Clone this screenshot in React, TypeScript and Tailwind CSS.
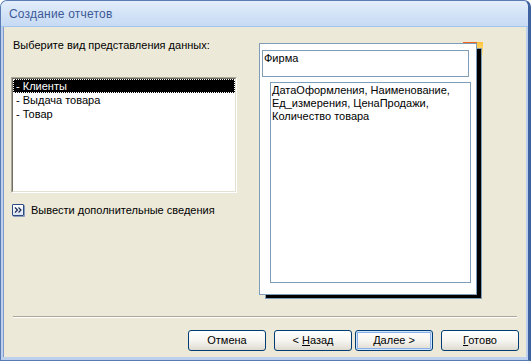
import React from "react";

const items = ["- Клиенты", "- Выдача товара", "- Товар"];

function XpButton({ children, primary }: { children: React.ReactNode; primary?: boolean }) {
  return (
    <button
      className={
        "w-[78px] h-[21px] rounded-[3px] border border-[#003c74] bg-gradient-to-b from-[#ffffff] via-[#f6f5f1] to-[#dedbd0] text-[11px] leading-[19px] text-black " +
        (primary ? "shadow-[inset_0_0_0_1px_#cee7ff,inset_0_0_0_2px_#8aaee6]" : "")
      }
    >
      {children}
    </button>
  );
}

export default function App() {
  return (
    <div className="w-[531px] h-[361px] flex flex-col rounded-t-[7px] border border-[#5a7cb4] border-r-[3px] border-r-[#3f62a0] bg-[#bcd0ee] overflow-hidden font-['Liberation_Sans',Arial,sans-serif]">
      {/* title bar */}
      <div className="h-[26px] shrink-0 flex items-center pl-[8px] bg-gradient-to-b from-[#e4eefa] via-[#d3e3f7] to-[#c7dbf4] border-b border-[#a2c4ee]">
        <span className="text-[12px] text-[#3d5a98] tracking-[0.2px]">Создание отчетов</span>
      </div>

      {/* body */}
      <div className="flex-1 mx-[2px] mb-[3px] flex flex-col bg-[#ece9d8] border-l border-[#7f9cc9]">
        <div className="h-[289px] shrink-0 flex">
          {/* left column */}
          <div className="ml-[7px] w-[226px] flex flex-col">
            <p className="mt-[11px] ml-[2px] h-[14px] text-[11px] leading-[14px] text-black">
              Выберите вид представления данных:
            </p>
            <div className="mt-[25px] h-[116px] border border-t-[#aca899] border-l-[#aca899] border-r-white border-b-white">
              <div className="h-full bg-white border border-t-[#716f64] border-l-[#716f64] border-r-[#e2dfd3] border-b-[#e2dfd3]">
                {items.map((it, i) => (
                  <div
                    key={it}
                    className={
                      "h-[14px] pl-[2px] text-[11px] leading-[12px] " +
                      (i === 0 ? "bg-black text-white border border-dotted border-white" : "text-black border border-transparent")
                    }
                  >
                    {it}
                  </div>
                ))}
              </div>
            </div>
            <div className="mt-[10px] flex items-center h-[14px]">
              <div className="ml-[1px] w-[12px] h-[12px] rounded-[1px] border border-[#2d4a85] bg-gradient-to-b from-white to-[#dbe4f4] flex items-center justify-center shadow-[1px_1px_0_#8a9bbd]">
                <svg width="8" height="6" viewBox="0 0 8 6">
                  <path d="M1 0.5 L3.5 3 L1 5.5 M4.5 0.5 L7 3 L4.5 5.5" stroke="#1b2a55" strokeWidth="1.2" fill="none" />
                </svg>
              </div>
              <span className="ml-[7px] text-[11px] text-black">Вывести дополнительные сведения</span>
            </div>
          </div>

          {/* preview */}
          <div className="relative ml-[22px] mt-[16px] w-[218px] h-[252px]">
            <div className="absolute left-[204px] top-[-1px] w-[15px] h-[2px] bg-[#f2641a]" />
            <div className="absolute left-[218px] top-[-1px] w-[6px] h-[13px] bg-gradient-to-b from-[#ffc23a] to-[#ffe98a]" />
            <div className="absolute left-[6px] top-[5px] w-[217px] h-[251px] bg-black border border-[#7f9db9]" />
            <div className="absolute inset-0 bg-white border border-[#7f9db9] pt-[6px] pl-[2px] flex flex-col">
              <div className="w-[207px] h-[27px] border border-[#7f9db9] px-[1px] text-[11px] leading-[14px] text-black">
                Фирма
              </div>
              <div className="ml-[8px] mt-[5px] w-[201px] h-[201px] border border-[#7f9db9] px-[1px] pt-[1px] text-[11px] leading-[13px] text-black">
                ДатаОформления, Наименование,
                <br />
                Ед_измерения, ЦенаПродажи,
                <br />
                Количество товара
              </div>
            </div>
          </div>
        </div>

        {/* separator */}
        <div className="mx-[9px] border-t border-[#aca899] border-b border-b-white" />

        {/* buttons */}
        <div className="mt-[12px] pr-[7px] flex justify-end">
          <XpButton>Отмена</XpButton>
          <div className="w-[8px]" />
          <XpButton>
            &lt; <span className="underline">Н</span>азад
          </XpButton>
          <div className="w-[3px]" />
          <XpButton primary>
            <span className="underline">Д</span>алее &gt;
          </XpButton>
          <div className="w-[8px]" />
          <XpButton>
            <span className="underline">Г</span>отово
          </XpButton>
        </div>
      </div>
    </div>
  );
}
